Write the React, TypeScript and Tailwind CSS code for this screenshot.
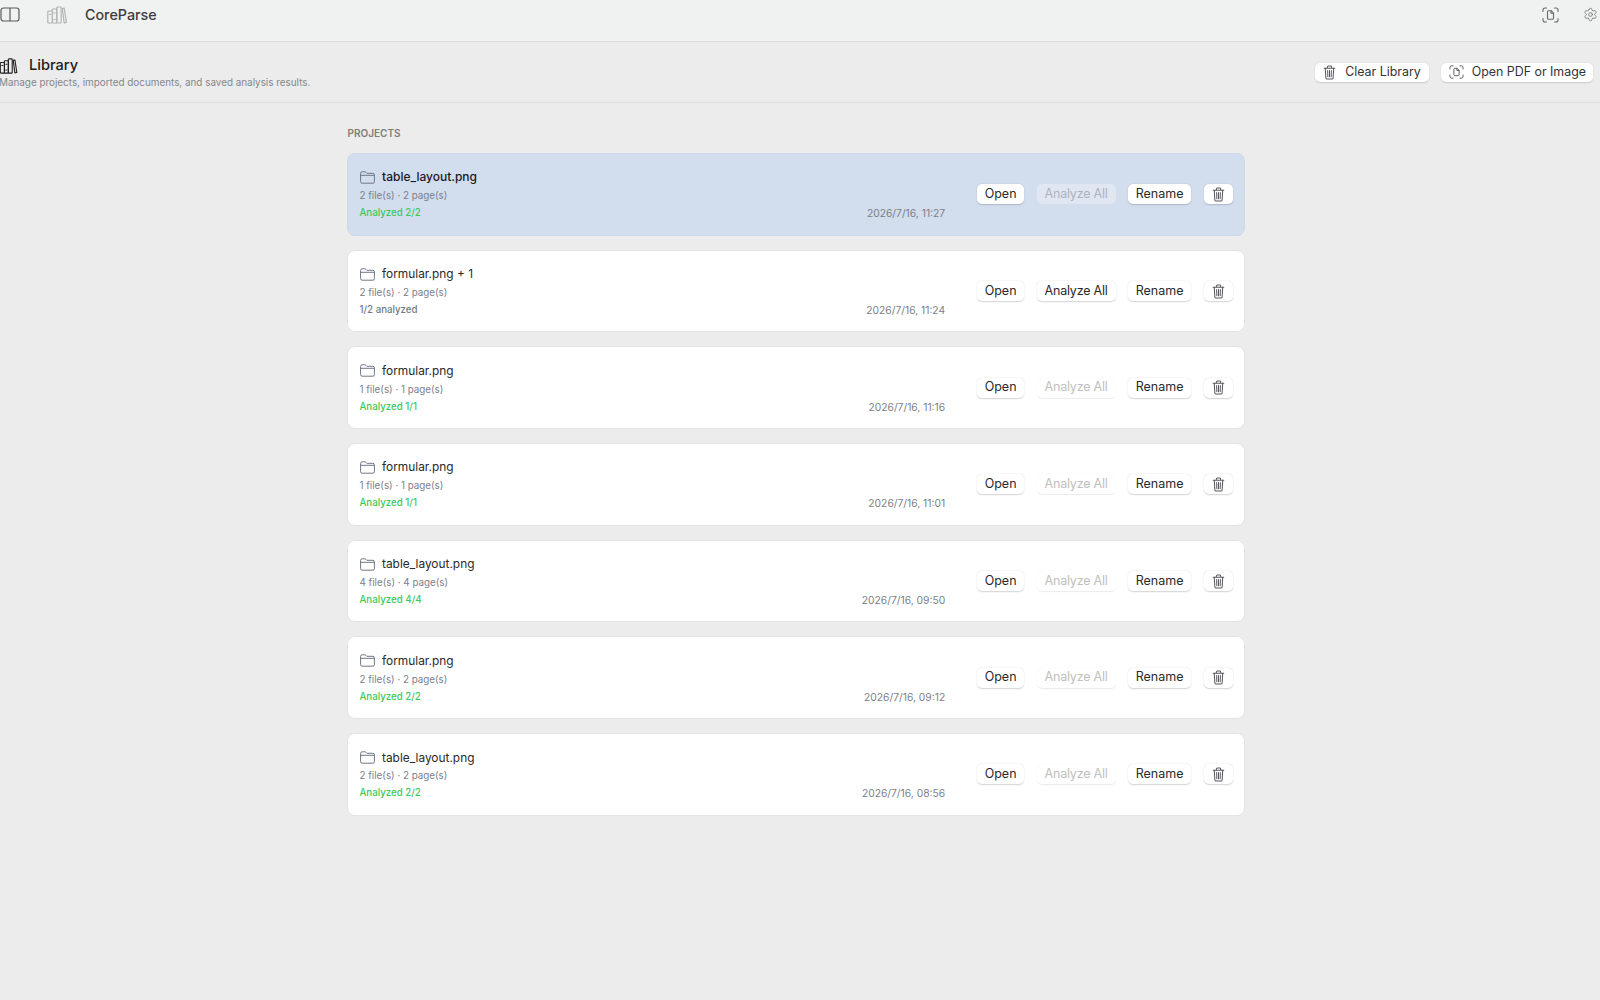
import { Settings } from "lucide-react";

type Project = {
  name: string;
  files: string;
  status: string;
  date: string;
  done: boolean;
  selected?: boolean;
};

const projects: Project[] = [
  { name: "table_layout.png", files: "2 file(s) · 2 page(s)", status: "Analyzed 2/2", date: "2026/7/16, 11:27", done: true, selected: true },
  { name: "formular.png + 1", files: "2 file(s) · 2 page(s)", status: "1/2 analyzed", date: "2026/7/16, 11:24", done: false },
  { name: "formular.png", files: "1 file(s) · 1 page(s)", status: "Analyzed 1/1", date: "2026/7/16, 11:16", done: true },
  { name: "formular.png", files: "1 file(s) · 1 page(s)", status: "Analyzed 1/1", date: "2026/7/16, 11:01", done: true },
  { name: "table_layout.png", files: "4 file(s) · 4 page(s)", status: "Analyzed 4/4", date: "2026/7/16, 09:50", done: true },
  { name: "formular.png", files: "2 file(s) · 2 page(s)", status: "Analyzed 2/2", date: "2026/7/16, 09:12", done: true },
  { name: "table_layout.png", files: "2 file(s) · 2 page(s)", status: "Analyzed 2/2", date: "2026/7/16, 08:56", done: true },
];

function BooksIcon({ className }: { className?: string }) {
  return (
    <svg viewBox="0 0 20 18" fill="none" stroke="currentColor" strokeWidth="1.2" strokeLinejoin="round" className={className}>
      <rect x="0.8" y="5" width="4.6" height="12" rx="0.8" />
      <rect x="5.4" y="3" width="4.4" height="14" rx="0.8" />
      <rect x="9.8" y="1" width="4.4" height="16" rx="0.8" />
      <path d="M2 8.5h2.2M6.5 7h2.2M6.5 13.5h2.2" />
      <path d="M15.3 2.6l1.9-.4 2.2 14.2-2.2.4z" />
    </svg>
  );
}

function TrashIcon({ className }: { className?: string }) {
  return (
    <svg viewBox="0 0 14 17" fill="none" stroke="currentColor" strokeWidth="1.15" strokeLinecap="round" className={className}>
      <path d="M1 3.6h12M4.6 3.4V2.2A1.2 1.2 0 0 1 5.8 1h2.4a1.2 1.2 0 0 1 1.2 1.2v1.2" />
      <path d="M2.2 3.8l.7 10.9a1.3 1.3 0 0 0 1.3 1.2h5.6a1.3 1.3 0 0 0 1.3-1.2l.7-10.9" />
      <path d="M4.9 6.2l.2 7.2M7 6.2v7.2M9.1 6.2l-.2 7.2" />
    </svg>
  );
}

function ScanDocIcon({ className }: { className?: string }) {
  return (
    <svg viewBox="0 0 17 16" fill="none" stroke="currentColor" strokeWidth="1.1" strokeLinecap="round" strokeLinejoin="round" className={className}>
      <path d="M1 4.5V3a2 2 0 0 1 2-2h1.5M12.5 1H14a2 2 0 0 1 2 2v1.5M16 11.5V13a2 2 0 0 1-2 2h-1.5M4.5 15H3a2 2 0 0 1-2-2v-1.5" />
      <path d="M5.5 4.7a1 1 0 0 1 1-1h2.6l2.4 2.5v5a1 1 0 0 1-1 1h-4a1 1 0 0 1-1-1z" />
      <path d="M9 3.8v2.5h2.4" />
    </svg>
  );
}

function SidebarIcon({ className }: { className?: string }) {
  return (
    <svg viewBox="0 0 20 15" fill="none" stroke="currentColor" strokeWidth="1.2" className={className}>
      <rect x="1" y="1" width="18" height="13" rx="2.5" />
      <path d="M10 1v13" />
    </svg>
  );
}

function FolderIcon({ className }: { className?: string }) {
  return (
    <svg viewBox="0 0 15 13" fill="none" stroke="currentColor" strokeWidth="1" strokeLinejoin="round" className={className}>
      <path d="M0.6 2.4A1.6 1.6 0 0 1 2.2 0.8h2.7c.5 0 .8.2 1.1.5l.9 1h6a1.5 1.5 0 0 1 1.5 1.5v6.9a1.5 1.5 0 0 1-1.5 1.5H2.1a1.5 1.5 0 0 1-1.5-1.5z" />
      <path d="M0.6 4.3h13.8" />
    </svg>
  );
}

function RowButton({ label, disabled, selected }: { label: string; disabled?: boolean; selected?: boolean }) {
  if (disabled) {
    return (
      <button
        type="button"
        className={
          selected
            ? "flex h-[20px] items-center rounded-[5px] bg-[#e0e7f2] px-[8px] text-[12.5px] tracking-[-0.2px] text-[#adb3bd]"
            : "flex h-[20px] items-center rounded-[5px] bg-white px-[8px] text-[12.5px] tracking-[-0.2px] text-[#c0c0c0] shadow-[0_0.5px_1px_rgba(0,0,0,0.08)]"
        }
      >
        {label}
      </button>
    );
  }
  return (
    <button
      type="button"
      className={
        label === "Analyze All"
          ? "flex h-[20px] items-center rounded-[5px] bg-white px-[8px] text-[12.5px] tracking-[-0.2px] text-[#2a2a2a] shadow-[0_0.5px_1.5px_rgba(0,0,0,0.18)]"
          : "flex h-[20px] items-center rounded-[5px] bg-white px-[7.5px] text-[12.5px] text-[#2a2a2a] shadow-[0_0.5px_1.5px_rgba(0,0,0,0.18)]"
      }
    >
      {label}
    </button>
  );
}

function ProjectRow({ project }: { project: Project }) {
  const { name, files, status, date, done, selected } = project;
  return (
    <div
      className={
        selected
          ? "flex h-[82.7px] items-center rounded-[8px] border border-[#cdd8e8] bg-[#d2ddee] pl-[12px] pr-[11px]"
          : "flex h-[82.7px] items-center rounded-[8px] border border-[#e4e4e4] bg-white pl-[12px] pr-[11px]"
      }
    >
      <div className="flex min-w-0 flex-1 items-end justify-between">
        <div className="min-w-0">
          <div className="flex items-center gap-[7.5px]">
            <FolderIcon className="h-[13px] w-[15px] text-[#6f7785]" />
            <span className={selected ? "text-[12px] font-medium text-[#1a1a1e]" : "text-[11.9px] text-[#2a2a2a]"}>{name}</span>
          </div>
          <p className="mt-[2px] text-[9.8px] leading-[15px] text-[#7b808a]">{files}</p>
          <p className={done ? "mt-[3px] text-[9.7px] leading-[14px] font-medium text-[#3bc95a]" : "mt-[3px] text-[9.7px] leading-[14px] font-medium text-[#75797f]"}>
            {status}
          </p>
        </div>
        <span className="text-[10.3px] leading-[14px] text-[#7b7f86]">{date}</span>
      </div>
      <div className="ml-[32px] flex items-center gap-[12.5px]">
        <RowButton label="Open" />
        <RowButton label="Analyze All" disabled={done} selected={selected} />
        <RowButton label="Rename" />
        <button type="button" className="flex h-[20px] w-[29px] items-center justify-center rounded-[5px] bg-white text-[#55585e] shadow-[0_0.5px_1.5px_rgba(0,0,0,0.18)]">
          <TrashIcon className="h-[15px] w-[13px]" />
        </button>
      </div>
    </div>
  );
}

export default function App() {
  return (
    <div className="min-h-[1000px] overflow-hidden bg-[#ececec] font-['Inter',sans-serif] text-[#1f1f1f]">
      <header className="flex h-[42px] items-center justify-between border-b border-[#dcdcdc] bg-[#f0f1f1] pb-[12px]">
        <div className="flex items-center">
          <SidebarIcon className="h-[15px] w-[20px] text-[#5a5a5a]" />
          <BooksIcon className="ml-[27px] h-[18px] w-[20px] text-[#b4b4b4]" />
          <span className="ml-[18px] text-[14.3px] font-medium text-[#3d3d3d]">CoreParse</span>
        </div>
        <div className="flex items-center gap-[24px] pr-[2px]">
          <ScanDocIcon className="h-[16px] w-[17px] text-[#6a6a6a]" />
          <Settings className="h-[15px] w-[15px] text-[#6a6a6a]" strokeWidth={1.2} />
        </div>
      </header>

      <section className="flex h-[61px] items-center justify-between border-b border-[#e0e0e0] pr-[7px]">
        <div className="-ml-px pt-[2px]">
          <div className="flex h-[17px] items-center gap-[11px]">
            <BooksIcon className="h-[16px] w-[19px] text-[#1c1c1c]" />
            <h1 className="text-[14.6px] font-medium text-[#1c1c1c]">Library</h1>
          </div>
          <p className="text-[9.9px] leading-[14px] text-[#85878a]">
            Manage projects, imported documents, and saved analysis results.
          </p>
        </div>
        <div className="flex items-center gap-[12px]">
          <button type="button" className="flex h-[19px] items-center gap-[9px] rounded-[5px] bg-white pl-[8px] pr-[8px] text-[12.4px] text-[#333] shadow-[0_0.5px_1.5px_rgba(0,0,0,0.15)]">
            <TrashIcon className="h-[15px] w-[13px] text-[#55585e]" />
            Clear Library
          </button>
          <button type="button" className="flex h-[19px] items-center gap-[8px] rounded-[5px] bg-white pl-[8px] pr-[7px] text-[12.4px] text-[#333] shadow-[0_0.5px_1.5px_rgba(0,0,0,0.15)]">
            <ScanDocIcon className="h-[14px] w-[15px] text-[#55585e]" />
            Open PDF or Image
          </button>
        </div>
      </section>

      <main className="pr-[9px]">
        <div className="mx-auto w-[898px] pt-[23px]">
          <h2 className="ml-px text-[10px] leading-[14px] font-semibold text-[#7d7d7d]">PROJECTS</h2>
          <div className="mt-[13px] flex flex-col gap-[14px]">
            {projects.map((project, index) => (
              <ProjectRow key={index} project={project} />
            ))}
          </div>
        </div>
      </main>
    </div>
  );
}
